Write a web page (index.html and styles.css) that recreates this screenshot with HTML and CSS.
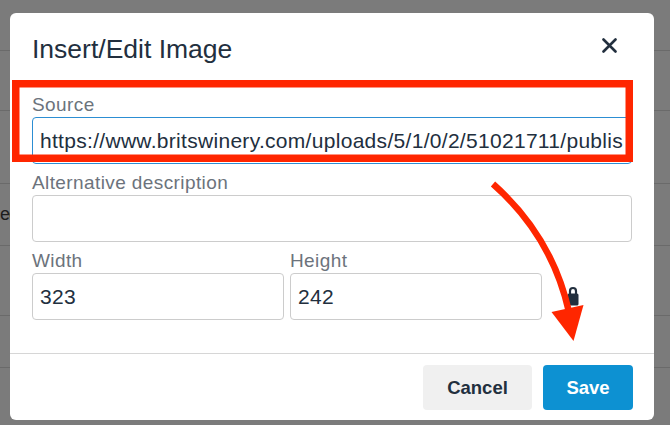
FILE: index.html
```html
<!DOCTYPE html>
<html lang="en">
<head>
<meta charset="utf-8">
<title>Insert/Edit Image</title>
<link rel="stylesheet" href="styles.css">
</head>
<body>
<div class="page">
  <div class="bg-rows">
    <div class="bg-row h1"></div>
    <div class="bg-row h2"></div>
    <div class="bg-row h3"></div>
    <div class="bg-row h4"><span class="bg-text">ec</span></div>
    <div class="bg-row h5"></div>
    <div class="bg-row h6"></div>
    <div class="bg-row h7"></div>
  </div>

  <div class="dialog" role="dialog">
    <div class="dlg-header">
      <h1 class="dlg-title">Insert/Edit Image</h1>
      <button class="close-btn" aria-label="Close">
        <svg width="15" height="15" viewBox="0 0 15 15"><path d="M1.5 1.5 L13.5 13.5 M13.5 1.5 L1.5 13.5" stroke="#222f3e" stroke-width="2.6" stroke-linecap="round" fill="none"/></svg>
      </button>
    </div>

    <div class="dlg-body">
      <div class="field">
        <label class="field-label">Source</label>
        <input class="field-input is-focused" type="text" value="https://www.britswinery.com/uploads/5/1/0/2/51021711/published/wine.jpg">
      </div>
      <div class="field">
        <label class="field-label">Alternative description</label>
        <input class="field-input" type="text" value="">
      </div>
      <div class="dims">
        <div class="field">
          <label class="field-label">Width</label>
          <input class="field-input" type="text" value="323">
        </div>
        <div class="field">
          <label class="field-label">Height</label>
          <input class="field-input" type="text" value="242">
        </div>
        <div class="lock-wrap">
          <svg class="lock" width="12" height="20" viewBox="0 0 12 20"><path d="M3 8.5 V5 a3 3 0 0 1 6 0 V8.5" stroke="#222f3e" stroke-width="2.2" fill="none"/><rect x="0.5" y="7.5" width="11" height="12" rx="1.5" fill="#222f3e"/></svg>
        </div>
      </div>
    </div>

    <div class="dlg-footer">
      <button class="btn btn-cancel">Cancel</button>
      <button class="btn btn-save">Save</button>
    </div>
  </div>

  <svg class="annot" width="670" height="425" viewBox="0 0 670 425">
    <rect x="15.75" y="83.75" width="613.5" height="74.5" fill="none" stroke="#ff2600" stroke-width="7.5"/>
    <path d="M493 184 Q552 236 569 312" fill="none" stroke="#ff2600" stroke-width="6.5"/>
    <polygon points="551.5,312 583.5,305 573.5,341" fill="#ff2600"/>
  </svg>
</div>
</body>
</html>
```

FILE: styles.css
```css
* { box-sizing: border-box; }

html, body {
  margin: 0;
  padding: 0;
}

body {
  width: 670px;
  height: 425px;
  overflow: hidden;
  background: #7b7b7b;
  font-family: "Liberation Sans", Arial, sans-serif;
}

.page {
  position: relative;
  width: 670px;
  height: 425px;
}

.bg-rows {
  display: flex;
  flex-direction: column;
}

.bg-row {
  border-bottom: 1px solid #6a6a6a;
  display: flex;
  align-items: center;
}

.h1 { height: 51px; }
.h2 { height: 60px; }
.h3 { height: 73px; }
.h4 { height: 62px; }
.h5 { height: 70px; }
.h6 { height: 52px; }
.h7 { height: 57px; border-bottom: none; }

.bg-text {
  font-size: 18px;
  letter-spacing: -1px;
  color: #1d1d1d;
}

.dialog {
  position: absolute;
  left: 10px;
  top: 13px;
  width: 644px;
  height: 407px;
  background: #fff;
  border-radius: 6px;
  display: flex;
  flex-direction: column;
}

.dlg-header {
  display: flex;
  justify-content: space-between;
  align-items: flex-start;
  padding: 20px 37px 0 22px;
}

.dlg-title {
  margin: 0;
  font-size: 26.5px;
  line-height: 32px;
  font-weight: 400;
  color: #222f3e;
}

.close-btn {
  margin-top: 5px;
  width: 15px;
  height: 15px;
  padding: 0;
  border: 0;
  background: none;
  display: flex;
}

.dlg-body {
  display: flex;
  flex-direction: column;
  gap: 6px;
  padding: 27px 22px 0;
}

.field {
  display: flex;
  flex-direction: column;
}

.field-label {
  font-size: 19px;
  line-height: 25px;
  letter-spacing: 0.4px;
  color: #6c737c;
}

.field-input {
  height: 47px;
  width: 100%;
  border: 1px solid #cccccc;
  border-radius: 4px;
  padding: 0 7px;
  font-family: "Liberation Sans", Arial, sans-serif;
  font-size: 21px;
  letter-spacing: 0.3px;
  color: #222f3e;
  background: #fff;
  outline: none;
}

.field-input.is-focused {
  border-color: #2c8ed3;
}

.dims {
  display: grid;
  grid-template-columns: 252px 252px 1fr;
  column-gap: 6px;
}

.lock-wrap {
  display: flex;
  align-items: flex-end;
  padding: 0 0 14px 19px;
}

.dlg-footer {
  margin-top: auto;
  border-top: 1px solid #d6d6d6;
  display: flex;
  justify-content: flex-end;
  gap: 11px;
  padding: 11px 21px 10px;
}

.btn {
  height: 45px;
  border: 0;
  border-radius: 4px;
  font-family: "Liberation Sans", Arial, sans-serif;
  font-size: 18.5px;
  font-weight: 700;
  padding: 0;
}

.btn-cancel {
  width: 109px;
  background: #f0f0f0;
  color: #222f3e;
}

.btn-save {
  width: 90px;
  background: #0d91d2;
  color: #fff;
}

.annot {
  position: absolute;
  left: 0;
  top: 0;
  pointer-events: none;
}
```
